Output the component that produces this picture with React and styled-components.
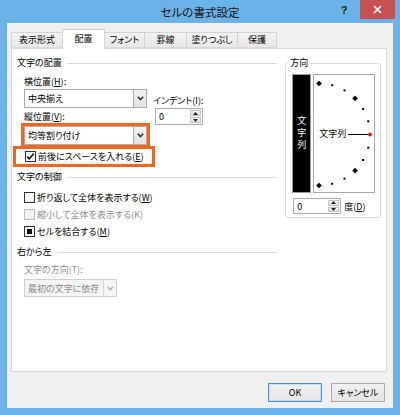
import React from "react";
import styled, { createGlobalStyle } from "styled-components";

const FONT = `"Noto Sans CJK JP", "Noto Sans", sans-serif`;

const Global = createGlobalStyle`
  html, body { margin: 0; padding: 0; background: #6ab2e8; }
  #root { width: 400px; height: 415px; }
`;

const Window = styled.div`
  width: 400px;
  height: 415px;
  box-sizing: border-box;
  background: #6ab2e8;
  padding: 0 7px 7px;
  display: flex;
  flex-direction: column;
  font-family: ${FONT};
  font-size: 9px;
  font-feature-settings: "palt";
  color: #000;
`;

const TitleBar = styled.div`
  height: 23px;
  margin: 0 -7px;
  display: grid;
  grid-template-columns: 1fr auto 1fr;
  align-items: start;
`;

const Title = styled.div`
  grid-column: 2;
  font-size: 11.5px;
  line-height: 15px;
  padding-top: 5px;
  color: #111;
`;

const Controls = styled.div`
  grid-column: 3;
  justify-self: end;
  display: flex;
  align-items: flex-start;
  padding-right: 5px;
`;

const HelpButton = styled.div`
  width: 14px;
  height: 20px;
  margin-right: 9px;
  display: flex;
  align-items: center;
  justify-content: center;
  font-family: "Liberation Sans", sans-serif;
  font-weight: bold;
  font-size: 11px;
  color: #1a1a1a;
`;

const CloseButton = styled.div`
  width: 35px;
  height: 19px;
  background: #c75050;
  display: flex;
  align-items: center;
  justify-content: center;
`;

const Client = styled.div`
  flex: 1;
  background: #f0f0f0;
  display: flex;
  flex-direction: column;
  padding: 6px 6px 0 4px;
`;

const TabRow = styled.div`
  display: flex;
  align-items: flex-end;
  height: 19px;
  position: relative;
  z-index: 1;
`;

const Tab = styled.div`
  box-sizing: border-box;
  width: ${(p) => p.$w}px;
  height: ${(p) => (p.$active ? 20 : 16)}px;
  margin-bottom: ${(p) => (p.$active ? -1 : 0)}px;
  margin-left: -1px;
  &:first-child { margin-left: 0; }
  border: 1px solid #d3d3d3;
  border-bottom: ${(p) => (p.$active ? "none" : "1px solid #d9d9d9")};
  background: ${(p) => (p.$active ? "#fff" : "linear-gradient(#f2f2f2, #e8e8e8)")};
  position: relative;
  z-index: ${(p) => (p.$active ? 2 : 1)};
  display: flex;
  align-items: ${(p) => (p.$active ? "flex-start" : "center")};
  padding-top: ${(p) => (p.$active ? 2 : 0)}px;
  justify-content: center;
  line-height: 14px;
`;

const Panel = styled.div`
  box-sizing: border-box;
  height: 324px;
  background: #fff;
  border: 1px solid #d9d9d9;
  padding: 7px 5px 0 5px;
  display: flex;
  align-items: flex-start;
`;

const LeftColumn = styled.div`
  width: 261px;
  display: flex;
  flex-direction: column;
`;

const Heading = styled.div`
  height: 14px;
  line-height: 14px;
  display: flex;
  align-items: center;
  margin-top: ${(p) => p.$mt || 0}px;
  &::after {
    content: "";
    flex: 1;
    height: 1px;
    background: #dcdcdc;
    margin-left: 5px;
  }
`;

const Section = styled.div`
  display: flex;
  flex-direction: column;
  align-items: flex-start;
  padding-left: 7px;
  margin-top: ${(p) => p.$mt || 0}px;
`;

const AlignGrid = styled.div`
  display: grid;
  grid-template-columns: 123px 70px;
  grid-template-rows: 14px 19px 18px 19px;
  column-gap: 6px;
`;

const Label = styled.div`
  line-height: 14px;
  color: ${(p) => (p.$disabled ? "#8d8d8d" : "#000")};
  align-self: ${(p) => p.$align || "auto"};
  margin-top: ${(p) => p.$mt || 0}px;
  white-space: nowrap;
`;

const Combo = styled.div`
  box-sizing: border-box;
  width: ${(p) => p.$w}px;
  height: ${(p) => p.$h || 19}px;
  margin-top: ${(p) => p.$mt || 0}px;
  border: 1px solid ${(p) => (p.$disabled ? "#cfcfcf" : "#acacac")};
  background: ${(p) => (p.$disabled ? "#f4f4f4" : "#fff")};
  display: flex;
  align-items: stretch;
  outline: ${(p) => (p.$highlight ? "3px solid #f2661f" : "none")};
  outline-offset: 0;
`;

const ComboText = styled.div`
  flex: 1;
  display: flex;
  align-items: center;
  padding-left: 3px;
  color: ${(p) => (p.$disabled ? "#8a8a8a" : "#000")};
  white-space: nowrap;
`;

const ComboButton = styled.div`
  width: 12px;
  border-left: 1px solid ${(p) => (p.$disabled ? "#d8d8d8" : "#acacac")};
  background: ${(p) => (p.$disabled ? "#f4f4f4" : "linear-gradient(#f2f2f2, #e2e2e2)")};
  display: flex;
  align-items: center;
  justify-content: center;
`;

const Spin = styled.div`
  box-sizing: border-box;
  width: 48px;
  height: ${(p) => p.$h || 17}px;
  margin-left: ${(p) => p.$ml || 0}px;
  border: 1px solid #abadb3;
  background: #fff;
  display: flex;
`;

const SpinValue = styled.div`
  flex: 1;
  display: flex;
  align-items: center;
  padding-left: 3px;
`;

const SpinButtons = styled.div`
  width: 11px;
  display: flex;
  flex-direction: column;
  gap: 1px;
  padding: 1px 1px 1px 0;
`;

const SpinHalf = styled.div`
  flex: 1;
  background: linear-gradient(#f3f3f3, #e3e3e3);
  border: 1px solid #c2c2c2;
  display: flex;
  align-items: center;
  justify-content: center;
`;

const Highlight = styled.div`
  box-sizing: border-box;
  width: 142px;
  height: 21px;
  margin: 1px 0 0 -11px;
  border: 3px solid #f2661f;
  padding-left: 9px;
  display: flex;
  align-items: center;
`;

const CheckRow = styled.div`
  height: 17px;
  display: flex;
  align-items: center;
  gap: 2px;
  color: ${(p) => (p.$disabled ? "#8d8d8d" : "#000")};
  white-space: nowrap;
`;

const Box = styled.div`
  box-sizing: border-box;
  width: 11px;
  height: 11px;
  border: 1px solid ${(p) => (p.$disabled ? "#bcbcbc" : "#333")};
  background: ${(p) => (p.$disabled ? "#f2f2f2" : "#fff")};
  display: flex;
  align-items: center;
  justify-content: center;
  flex-shrink: 0;
`;

const Mixed = styled.div`
  width: 5px;
  height: 5px;
  background: #111;
`;

const Key = styled.span`
  text-decoration: underline;
`;

const DirectionGroup = styled.fieldset`
  box-sizing: border-box;
  width: 96px;
  margin: 0 0 0 8px;
  border: 1px solid #dcdcdc;
  border-radius: 3px;
  padding: 4px 5px 3px 6px;
  min-inline-size: 0;
`;

const Legend = styled.legend`
  line-height: 14px;
  padding: 0 2px;
  margin-left: -4px;
`;

const DialRow = styled.div`
  display: flex;
  gap: 2px;
  height: 119px;
`;

const VerticalBar = styled.div`
  box-sizing: border-box;
  width: 19px;
  border: 1px solid #9d9d9d;
  background: #000;
  display: flex;
  align-items: center;
  justify-content: center;
`;

const VerticalText = styled.div`
  writing-mode: vertical-rl;
  color: #fff;
  letter-spacing: 3px;
  line-height: 9px;
  font-feature-settings: normal;
`;

const DialBox = styled.div`
  box-sizing: border-box;
  width: 62px;
  border: 1px solid #a9a9a9;
  background: #fff;
  position: relative;
  display: flex;
  align-items: center;
  padding-left: 5px;
`;

const DialArt = styled.svg`
  position: absolute;
  left: 0;
  top: 0;
`;

const DialLabel = styled.span`
  position: relative;
  line-height: 14px;
  background: #fff;
  padding-right: 2px;
`;

const DegreeRow = styled.div`
  display: flex;
  align-items: center;
  gap: 3px;
  margin-top: 5px;
`;

const ButtonRow = styled.div`
  display: flex;
  justify-content: flex-end;
  gap: 9px;
  margin-top: 11px;
  padding-right: 2px;
`;

const Button = styled.div`
  box-sizing: border-box;
  width: 54px;
  height: 19px;
  border: 1px solid ${(p) => (p.$default ? "#4a90d0" : "#acacac")};
  box-shadow: ${(p) => (p.$default ? "inset 0 0 0 1px #c5def5" : "none")};
  background: linear-gradient(#f0f0f0, #e5e5e5);
  display: flex;
  align-items: center;
  justify-content: center;
  line-height: 14px;
`;

const Chevron = ({ disabled }) => (
  <svg width="7" height="5" viewBox="0 0 7 5">
    <polyline points="0.8,0.8 3.5,3.6 6.2,0.8" fill="none" stroke={disabled ? "#b5b5b5" : "#333"} strokeWidth="1.6" />
  </svg>
);

const Arrow = ({ up }) => (
  <svg width="5" height="3" viewBox="0 0 5 3">
    <polygon points={up ? "0,3 5,3 2.5,0" : "0,0 5,0 2.5,3"} fill="#222" />
  </svg>
);

const Check = () => (
  <svg width="9" height="9" viewBox="0 0 9 9">
    <polyline points="1.2,4.6 3.4,6.8 7.8,1.6" fill="none" stroke="#111" strokeWidth="1.6" />
  </svg>
);

const CloseGlyph = () => (
  <svg width="9" height="9" viewBox="0 0 9 9">
    <path d="M1 1 L8 8 M8 1 L1 8" stroke="#fff" strokeWidth="1.6" />
  </svg>
);

function ComboBox({ text, w, h, mt, disabled, highlight }) {
  return (
    <Combo $w={w} $h={h} $mt={mt} $disabled={disabled} $highlight={highlight}>
      <ComboText $disabled={disabled}>{text}</ComboText>
      <ComboButton $disabled={disabled}>
        <Chevron disabled={disabled} />
      </ComboButton>
    </Combo>
  );
}

function SpinBox({ h, ml }) {
  return (
    <Spin $h={h} $ml={ml}>
      <SpinValue>0</SpinValue>
      <SpinButtons>
        <SpinHalf><Arrow up /></SpinHalf>
        <SpinHalf><Arrow /></SpinHalf>
      </SpinButtons>
    </Spin>
  );
}

function Dial() {
  const cx = 5, cy = 59, r = 51;
  const angles = Array.from({ length: 13 }, (_, i) => 90 - 15 * i);
  return (
    <DialArt width="60" height="117" viewBox="0 0 60 117">
      <line x1="33" y1="59.5" x2="54" y2="59.5" stroke="#000" strokeWidth="1" />
      {angles.map((a) => {
        const rad = (a * Math.PI) / 180;
        const x = cx + r * Math.cos(rad);
        const y = cy - r * Math.sin(rad) + 0.5;
        if (a === 0) return <circle key={a} cx={x} cy={y} r="2" fill="#e41b1b" />;
        if (a % 45 === 0)
          return <rect key={a} x={x - 2} y={y - 2} width="4" height="4" fill="#000" transform={`rotate(45 ${x} ${y})`} />;
        return <rect key={a} x={x - 1} y={y - 1} width="2" height="2" fill="#000" />;
      })}
    </DialArt>
  );
}

const tabs = [
  { label: "表示形式", w: 52 },
  { label: "配置", w: 43, active: true },
  { label: "フォント", w: 41 },
  { label: "罫線", w: 43 },
  { label: "塗りつぶし", w: 52 },
  { label: "保護", w: 40 },
];

export default function App() {
  return (
    <>
      <Global />
      <Window>
        <TitleBar>
          <Title>セルの書式設定</Title>
          <Controls>
            <HelpButton>?</HelpButton>
            <CloseButton><CloseGlyph /></CloseButton>
          </Controls>
        </TitleBar>
        <Client>
          <TabRow>
            {tabs.map((t) => (
              <Tab key={t.label} $w={t.w} $active={t.active}>{t.label}</Tab>
            ))}
          </TabRow>
          <Panel>
            <LeftColumn>
              <Heading>文字の配置</Heading>
              <Section $mt={5}>
                <AlignGrid>
                  <Label $align="center">横位置(<Key>H</Key>):</Label>
                  <span />
                  <ComboBox text="中央揃え" w={123} />
                  <Label $align="end">インデント(I):</Label>
                  <Label $align="center">縦位置(<Key>V</Key>):</Label>
                  <SpinBox h={17} ml={2} />
                  <ComboBox text="均等割り付け" w={123} highlight />
                </AlignGrid>
                <Highlight>
                  <CheckRow>
                    <Box><Check /></Box>
                    <span>前後にスペースを入れる(<Key>E</Key>)</span>
                  </CheckRow>
                </Highlight>
              </Section>
              <Heading $mt={3}>文字の制御</Heading>
              <Section $mt={5}>
                <CheckRow>
                  <Box />
                  <span>折り返して全体を表示する(<Key>W</Key>)</span>
                </CheckRow>
                <CheckRow $disabled>
                  <Box $disabled />
                  <span>縮小して全体を表示する(K)</span>
                </CheckRow>
                <CheckRow>
                  <Box><Mixed /></Box>
                  <span>セルを結合する(<Key>M</Key>)</span>
                </CheckRow>
              </Section>
              <Heading $mt={5}>右から左</Heading>
              <Section>
                <Label $disabled $mt={4}>文字の方向(T):</Label>
                <ComboBox text="最初の文字に依存" w={93} h={18} mt={2} disabled />
              </Section>
            </LeftColumn>
            <DirectionGroup>
              <Legend>方向</Legend>
              <DialRow>
                <VerticalBar>
                  <VerticalText>文字列</VerticalText>
                </VerticalBar>
                <DialBox>
                  <Dial />
                  <DialLabel>文字列</DialLabel>
                </DialBox>
              </DialRow>
              <DegreeRow>
                <SpinBox h={16} ml={1} />
                <span>度(<Key>D</Key>)</span>
              </DegreeRow>
            </DirectionGroup>
          </Panel>
          <ButtonRow>
            <Button $default>OK</Button>
            <Button>キャンセル</Button>
          </ButtonRow>
        </Client>
      </Window>
    </>
  );
}
